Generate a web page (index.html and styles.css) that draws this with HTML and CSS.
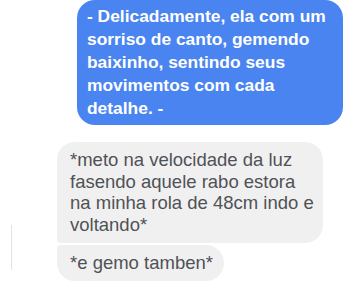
FILE: index.html
```html
<!DOCTYPE html>
<html lang="pt">
<head>
    <meta charset="UTF-8">
    <meta name="viewport" content="width=device-width, initial-scale=1.0">
    <title>Conversa</title>
    <link rel="stylesheet" href="styles.css">
</head>
<body>
    <div class="chat">
        <div class="row sent">
            <div class="bubble bubble-sent">- Delicadamente, ela com um sorriso de canto, gemendo baixinho, sentindo seus movimentos com cada detalhe. -</div>
        </div>

        <div class="row received">
            <div class="gutter">
                <span class="mark"></span>
            </div>
            <div class="group">
                <div class="bubble bubble-received first">*meto na velocidade da luz fasendo aquele rabo estora na minha rola de 48cm indo e voltando*</div>
                <div class="bubble bubble-received last">*e gemo tamben*</div>
            </div>
        </div>
    </div>
</body>
</html>
```

FILE: styles.css
```css
* {
    margin: 0;
    padding: 0;
    box-sizing: border-box;
}

body {
    font-family: "Liberation Sans", Arial, sans-serif;
    background: #ffffff;
    width: 355px;
    height: 294px;
    overflow: hidden;
}

.chat {
    display: flex;
    flex-direction: column;
}

.row {
    display: flex;
}

.sent {
    justify-content: flex-end;
    padding-right: 12px;
}

.bubble {
    border-radius: 18px;
}

.bubble-sent {
    width: 266px;
    background: #4a84f1;
    color: #ffffff;
    font-size: 17.4px;
    font-weight: bold;
    line-height: 23px;
    padding: 5px 8px 5px 10px;
}

.received {
    margin-top: 17px;
}

.gutter {
    width: 57px;
    display: flex;
    align-items: flex-end;
}

.mark {
    display: block;
    width: 1px;
    height: 45px;
    margin-left: 11px;
    margin-bottom: 11px;
    background: #e2e2e2;
}

.group {
    display: flex;
    flex-direction: column;
    align-items: flex-start;
    gap: 2px;
}

.bubble-received {
    background: #f1f0f0;
    color: #4f5257;
    font-size: 18.5px;
    line-height: 21.7px;
    padding: 7px 11px 7px 13px;
}

.first {
    width: 266px;
    padding-right: 6px;
    border-bottom-left-radius: 4px;
}

.last {
    border-top-left-radius: 4px;
}
```
